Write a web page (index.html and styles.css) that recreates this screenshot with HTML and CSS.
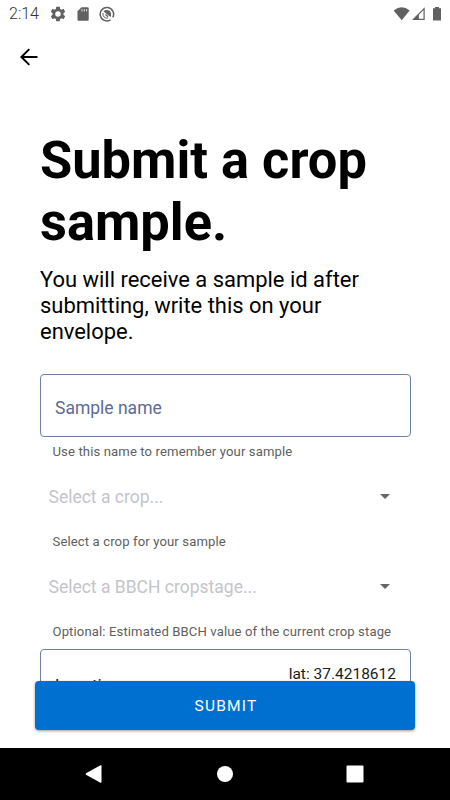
FILE: index.html
```html
<!DOCTYPE html>
<html lang="en">
<head>
<meta charset="utf-8">
<title>Submit a crop sample</title>
<link rel="stylesheet" href="styles.css">
</head>
<body>
<div class="screen">
  <header class="status">
    <span class="clock">2:14</span>
    <svg class="gear" width="16" height="16" viewBox="1.500 1.500 21 21"><path fill="currentColor" d="M19.14 12.94c.04-.3.06-.61.06-.94s-.02-.64-.07-.94l2.03-1.58a.49.49 0 0 0 .12-.61l-1.92-3.32a.49.49 0 0 0-.59-.22l-2.39.96c-.5-.38-1.03-.7-1.62-.94l-.36-2.54a.48.48 0 0 0-.48-.41h-3.84a.48.48 0 0 0-.47.41l-.36 2.54c-.59.24-1.13.57-1.62.94l-2.39-.96a.48.48 0 0 0-.59.22L2.74 8.87a.48.48 0 0 0 .12.61l2.03 1.58c-.05.3-.09.63-.09.94s.02.64.07.94l-2.03 1.58a.49.49 0 0 0-.12.61l1.92 3.32c.12.22.37.29.59.22l2.39-.96c.5.38 1.03.7 1.62.94l.36 2.54c.05.24.24.41.48.41h3.84c.24 0 .44-.17.47-.41l.36-2.54c.59-.24 1.13-.56 1.62-.94l2.39.96c.22.08.47 0 .59-.22l1.92-3.32a.48.48 0 0 0-.12-.61zM12 15.6A3.6 3.6 0 1 1 12 8.400a3.6 3.6 0 0 1 0 7.200z"/></svg>
    <svg class="card" width="12" height="14" viewBox="0 0 12 14"><path fill="currentColor" d="M4.500 .3H10.700Q11.700.3 11.700 1.300V12.700Q11.700 13.700 10.700 13.700H1.500Q.5 13.700.5 12.700V4.300Z"/><path stroke="#ddd" stroke-width="1" d="M5 2v2.500M7.300 2v2.500M9.600 2v2.500"/></svg>
    <svg class="ring" width="16" height="16" viewBox="0 0 16 16" fill="none"><path stroke="currentColor" stroke-width="1.500" d="M11.500 13.800A6.700 6.700 0 1 1 13.800 11.300"/><path stroke="currentColor" stroke-width="1" d="M9.300 12A4.200 4.200 0 0 1 4 7"/><path fill="currentColor" d="M4.500 5.500C6.500 3.300 10.300 3.600 11.700 6.500 12.400 8.200 12.200 9.500 11.500 11Z"/><path stroke="currentColor" stroke-width="1.300" d="M6.500 8.500L9 10.800"/></svg>
    <svg class="signals" width="50" height="16" viewBox="0 0 50 16"><path fill="currentColor" d="M.7 4.500Q8.700-1.800 16.700 4.500L8.700 14.300Z"/><path fill="currentColor" fill-rule="evenodd" d="M19 14L31.700 1.200V14ZM25.900 12.800H30.500V4.100L25.900 8.700Z"/><path fill="currentColor" d="M40 2.300h2V1h4v1.300h2V14.500H40Z"/></svg>
  </header>
  <nav class="toolbar">
    <svg width="20" height="20" viewBox="0 0 20 20" fill="none" stroke="#000" stroke-width="2"><path d="M18.500 10H2.800M10.300 2.100L2.400 10l7.900 7.900"/></svg>
  </nav>
  <main class="content">
    <h1>Submit a crop<br>sample.</h1>
    <p class="intro">You will receive a sample id after<br>submitting, write this on your<br>envelope.</p>
    <div class="field"><span>Sample name</span></div>
    <p class="hint">Use this name to remember your sample</p>
    <div class="select"><span>Select a crop...</span><i class="caret"></i></div>
    <p class="hint">Select a crop for your sample</p>
    <div class="select"><span>Select a BBCH cropstage...</span><i class="caret"></i></div>
    <p class="hint">Optional: Estimated BBCH value of the current crop stage</p>
    <div class="location"><span class="name">Location</span><span class="coords">lat: 37.4218612</span></div>
  </main>
  <button class="submit">SUBMIT</button>
  <footer class="navbar">
    <svg width="18" height="20" viewBox="0 0 18 20"><path fill="#fff" d="M1 9.300Q.3 10 1 10.700L15 18.600Q16.500 19.200 16.500 17.800V2.200Q16.500.8 15 1.400Z"/></svg>
    <svg width="18" height="18" viewBox="0 0 18 18"><circle cx="9" cy="9" r="8" fill="#fff"/></svg>
    <svg width="18" height="18" viewBox="0 0 18 18"><rect x=".5" y=".5" width="17" height="17" rx="1" fill="#fff"/></svg>
  </footer>
</div>
</body>
</html>
```
FILE: styles.css
```css
* { box-sizing: border-box; }
body { margin: 0; font-family: Roboto, "Liberation Sans", sans-serif; color: #000; background: #fff; }
h1, p { margin: 0; }
svg { display: block; flex: none; }
.screen { position: relative; display: flex; flex-direction: column; width: 450px; height: 800px; overflow: hidden; }
.status { display: flex; align-items: center; height: 27px; padding: 0 7px 0 9px; color: #616161; flex: none; }
.clock { width: 41px; font-size: 16px; line-height: 27px; font-weight: 300; color: #333; }
.card { margin-left: 11px; }
.ring { margin-left: 10px; }
.signals { margin-left: auto; }
.toolbar { height: 60px; padding: 20px 0 0 19px; flex: none; }
.content { flex: 1; min-height: 0; overflow: hidden; margin-bottom: 48px; padding: 42px 40px 0; white-space: nowrap; }
h1 { font-size: 52.400px; line-height: 62px; font-weight: 700; }
.intro { margin-top: 14px; font-size: 21.950px; line-height: 26px; }
.field { display: flex; align-items: center; width: 371px; height: 63px; margin-top: 29px; padding: 5px 14px 0; border: 1px solid #7181a4; border-radius: 4px; color: #5c6b92; font-size: 17.500px; }
.hint { height: 18px; margin-top: 6px; padding-left: 12.500px; font-size: 13.100px; line-height: 18px; letter-spacing: .12px; color: #606060; }
.select { display: flex; align-items: center; justify-content: space-between; height: 60px; margin-top: 6px; padding: 0 20px 0 8.500px; font-size: 17.500px; color: #c4c4ca; }
.caret { width: 0; height: 0; margin-bottom: 1px; border: 5.500px solid transparent; border-top: 5.500px solid #666; border-bottom: 0; }
.location { display: flex; justify-content: space-between; width: 371px; height: 100px; margin-top: 8px; padding: 14px 14px; border: 1px solid #7181a4; border-radius: 4px; color: #1b1b1b; }
.name { font-size: 17px; line-height: 20px; padding-top: 11px; }
.coords { font-size: 15.500px; line-height: 20px; }
.submit { position: absolute; left: 35px; top: 681px; width: 380px; height: 49px; padding: 1px 0 0; border: 0; border-radius: 4px; background: #0070d0; box-shadow: 0 1px 3px rgba(0,0,0,.4); color: #fff; font: 400 15.500px/48px Roboto, sans-serif; letter-spacing: 1.200px; text-indent: 2px; }
.navbar { display: flex; align-items: center; justify-content: space-between; height: 52px; padding: 0 86px 0 85px; background: #000; flex: none; }
```
